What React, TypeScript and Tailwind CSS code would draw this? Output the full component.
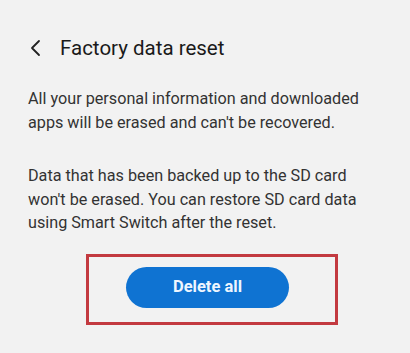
export default function App() {
  return (
    <div className="w-[410px] h-[353px] bg-[#f2f2f2] overflow-hidden font-['Roboto',sans-serif]">
      <div className="flex items-center pt-[34px] pl-[29px]">
        <svg width="14" height="18" viewBox="0 0 14 18" className="mr-[17px]">
          <path d="M10 2 L3 9 L10 16" fill="none" stroke="#222" strokeWidth="1.8" strokeLinecap="round" strokeLinejoin="round" />
        </svg>
        <h1 className="text-[20.5px] leading-[28px] text-[#1a1a1a]">Factory data reset</h1>
      </div>
      <div className="pl-[28px] pr-[20px] text-[16.2px] leading-[23.5px] text-[#333333]">
        <p className="mt-[25px]">
          All your personal information and downloaded
          <br />
          apps will be erased and can't be recovered.
        </p>
        <p className="mt-[30px]">
          Data that has been backed up to the SD card
          <br />
          won't be erased. You can restore SD card data
          <br />
          using Smart Switch after the reset.
        </p>
      </div>
      <div className="ml-[86px] mt-[19px] w-[252px] h-[71px] border-[3px] border-[#c33a40] pl-[37px] pt-[10px]">
        <button className="w-[163px] h-[41px] rounded-full bg-[#0f73d2] text-[#eef6ff] text-[16.5px] font-bold">
          Delete all
        </button>
      </div>
    </div>
  );
}
